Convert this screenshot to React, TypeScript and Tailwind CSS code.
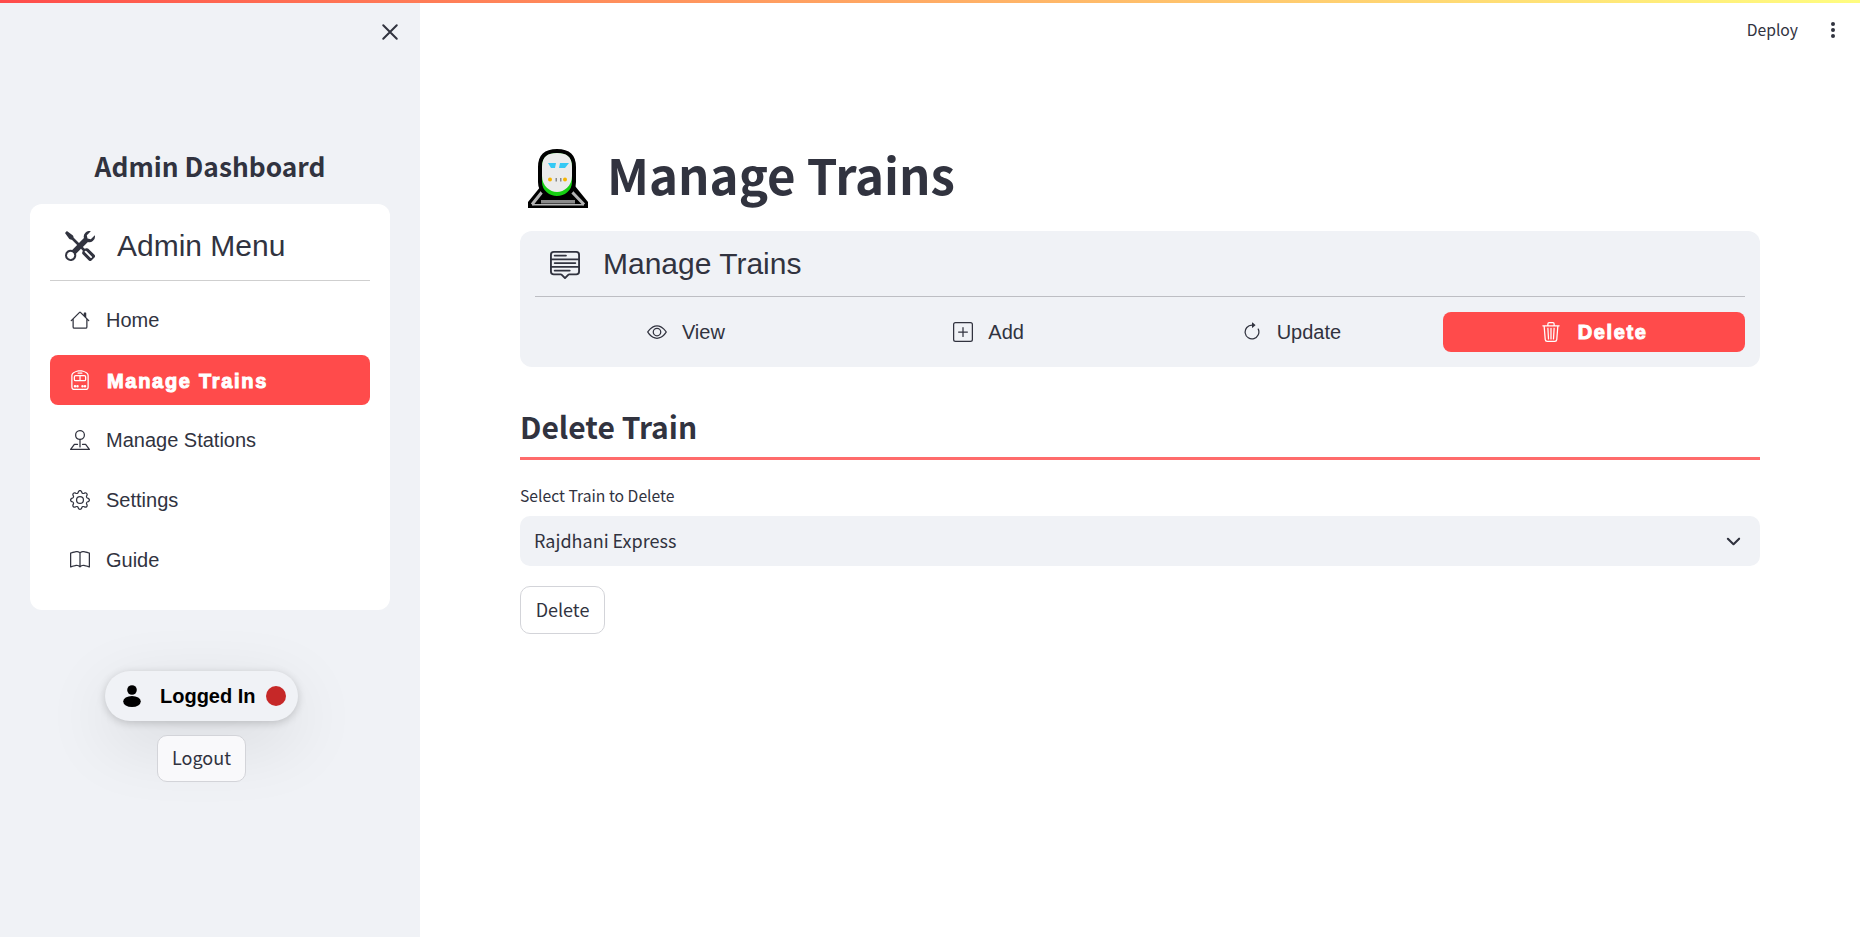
import type { FC, ReactNode } from 'react'
import {
  BsArrowClockwise,
  BsBook,
  BsChevronDown,
  BsEye,
  BsGear,
  BsHouse,
  BsMenuUp,
  BsPinMap,
  BsPlusSquare,
  BsTools,
  BsTrainFront,
  BsTrash3,
} from 'react-icons/bs'
import { clsx } from 'clsx'

const sourceSans = "font-['Noto_Sans_CJK_JP',sans-serif]"
const arial = "font-['Liberation_Sans',Arial,sans-serif]"

const menuItems = [
  { label: 'Home', icon: <BsHouse size={20} /> },
  { label: 'Manage Trains', icon: <BsTrainFront size={20} />, active: true },
  { label: 'Manage Stations', icon: <BsPinMap size={20} /> },
  { label: 'Settings', icon: <BsGear size={20} /> },
  { label: 'Guide', icon: <BsBook size={20} /> },
]

const tabs = [
  { label: 'View', icon: <BsEye size={20} /> },
  { label: 'Add', icon: <BsPlusSquare size={20} /> },
  { label: 'Update', icon: <BsArrowClockwise size={20} /> },
  { label: 'Delete', icon: <BsTrash3 size={20} />, active: true },
]

const TrainEmoji: FC = () => (
  <svg viewBox="7 8 62 62" className="h-[62px] w-[62px] shrink-0">
    <path d="M21 46 L8 62 V68 H68 V62 L55 46 Z" fill="#000" />
    <path d="M22 52 L12 64.5 M52 52 L64 64.5" stroke="#b5b5b5" strokeWidth="3" />
    <rect x="21" y="60" width="34" height="3.5" fill="#8a8a8a" />
    <rect x="12" y="64" width="52" height="1.5" fill="#b5b5b5" />
    <path
      d="M20 27 C20 15 27 11 37 11 C47 11 54 15 54 27 V42 C54 52 45 58 37 58 C29 58 20 52 20 42 Z"
      fill="#16d012"
      stroke="#000"
      strokeWidth="4"
    />
    <path
      d="M22 27 C22 16 28 13 37 13 C46 13 52 16 52 27 V36 C52 46 44 52 37 52 C30 52 22 46 22 36 Z"
      fill="#ebebeb"
    />
    <path d="M28 23 H36 L35 28 H31 Z" fill="#35c9f5" />
    <path d="M49 23 H40 L39 28 H45 Z" fill="#35c9f5" />
    <circle cx="30" cy="39.5" r="2" fill="#f5b400" />
    <circle cx="45" cy="39.5" r="2" fill="#f5b400" />
    <rect x="35.5" y="38" width="1.5" height="3.5" fill="#888" />
    <rect x="40" y="38" width="1.5" height="3.5" fill="#888" />
  </svg>
)

const PersonGlyph: FC = () => (
  <svg viewBox="0 0 18 22" className="h-[22px] w-[18px] shrink-0" fill="#000">
    <circle cx="9" cy="5" r="4.8" />
    <ellipse cx="9" cy="16.5" rx="8.8" ry="5.5" />
  </svg>
)

const OutlineButton: FC<{ className?: string; children: ReactNode }> = ({ className, children }) => (
  <button
    type="button"
    className={clsx(
      sourceSans,
      'flex items-center justify-center rounded-[10px] border border-[#d3d4d9] pb-[3px] text-[18px] leading-none text-[#31333f]',
      className,
    )}
  >
    {children}
  </button>
)

const Sidebar: FC = () => (
  <aside className="flex w-[420px] shrink-0 flex-col bg-[#f0f2f6] pt-[20px] text-[#31333f]">
    <div className="flex justify-end pr-[21px]">
      <svg viewBox="0 0 16 16" className="h-[18px] w-[18px]" stroke="#31333f" strokeWidth="1.8" strokeLinecap="round">
        <path d="M2 2 L14 14 M14 2 L2 14" />
      </svg>
    </div>
    <h2 className={clsx(sourceSans, 'mt-[106px] pb-[2px] text-center text-[26.3px] font-semibold leading-[38px]')}>
      Admin Dashboard
    </h2>
    <div className={clsx(arial, 'mx-[30px] mt-[17px] h-[406px] rounded-[12px] bg-white px-[20px]')}>
      <div className="flex h-[77px] items-center border-b border-[#cfcfcf] pl-[15px] pt-[8px]">
        <BsTools size={30} />
        <span className="ml-[22px] text-[30px] leading-none">Admin Menu</span>
      </div>
      <nav className="mt-[14px] flex flex-col gap-[10px]">
        {menuItems.map((item) => (
          <div
            key={item.label}
            className={clsx(
              'flex h-[50px] items-center rounded-[8px] pl-[20px] text-[20px]',
              item.active && 'bg-[#ff4b4b] text-white',
            )}
          >
            {item.icon}
            <span
              className={clsx(
                'ml-[16px]',
                item.active && 'ml-[17px] pt-[1px] font-bold tracking-[1.7px] [-webkit-text-stroke:1px_white]',
              )}
            >
              {item.label}
            </span>
          </div>
        ))}
      </nav>
    </div>
    <div className="mt-[61px] flex w-[403px] flex-col items-center">
      <div
        className={clsx(
          arial,
          'flex h-[50px] w-[193px] items-center rounded-full bg-[#f0f2f6] pl-[18px] shadow-[0_2px_8px_rgba(0,0,0,0.18),0_20px_70px_rgba(0,0,0,0.11)]',
        )}
      >
        <PersonGlyph />
        <span className="ml-[19px] text-[20px] font-bold leading-none text-black">Logged In</span>
        <span className="ml-[10px] h-[20px] w-[20px] rounded-full bg-[#c62828]" />
      </div>
      <OutlineButton className="relative mt-[14px] h-[47px] w-[89px] bg-[#f9f9fb]">Logout</OutlineButton>
    </div>
  </aside>
)

const Main: FC = () => (
  <main className="min-w-0 flex-1 text-[#31333f]">
    <div className={clsx(sourceSans, 'flex h-[57px] items-center justify-end pb-[4px]')}>
      <span className="text-[15.7px] leading-none">Deploy</span>
      <span className="ml-[33px] mr-[25px] flex flex-col gap-[2px]">
        <span className="h-[4px] w-[4px] rounded-full bg-[#31333f]" />
        <span className="h-[4px] w-[4px] rounded-full bg-[#31333f]" />
        <span className="h-[4px] w-[4px] rounded-full bg-[#31333f]" />
      </span>
    </div>
    <div className="px-[100px] pt-[88px]">
      <div className="mb-[21px] flex h-[62px] items-center pl-[7px]">
        <TrainEmoji />
        <h1 className={clsx(sourceSans, 'mb-[10px] ml-[18px] text-[49.2px] font-bold leading-none')}>Manage Trains</h1>
      </div>
      <section className={clsx(arial, 'h-[136px] rounded-[12px] bg-[#f0f2f6] px-[15px]')}>
        <div className="flex h-[66px] items-center border-b border-[#bdbec3] pl-[15px]">
          <BsMenuUp size={30} />
          <span className="ml-[23px] text-[30px] leading-none">Manage Trains</span>
        </div>
        <div className="mt-[15px] grid grid-cols-4 gap-[1px]">
          {tabs.map((tab) => (
            <div
              key={tab.label}
              className={clsx(
                'flex h-[40px] items-center justify-center rounded-[8px] text-[20px]',
                tab.active && 'bg-[#ff4b4b] text-white',
              )}
            >
              {tab.icon}
              <span
                className={clsx(
                  'ml-[15px]',
                  tab.active && 'ml-[17px] font-bold tracking-[1.6px] [-webkit-text-stroke:1px_white]',
                )}
              >
                {tab.label}
              </span>
            </div>
          ))}
        </div>
      </section>
      <h2 className={clsx(sourceSans, 'mt-[37px] border-b-[3px] border-[#ff6b6b] pb-[8px] text-[30px] font-semibold leading-[45px]')}>
        Delete Train
      </h2>
      <label className={clsx(sourceSans, 'mt-[23px] block text-[15.7px] leading-[25px]')}>Select Train to Delete</label>
      <div className={clsx(sourceSans, 'mt-[8px] flex h-[50px] items-center justify-between rounded-[10px] bg-[#f0f2f6] pl-[14px] pr-[18px] text-[18px]')}>
        <span className="pb-[1px]">Rajdhani Express</span>
        <BsChevronDown size={15} className="mr-[1px]" stroke="currentColor" strokeWidth={1.2} />
      </div>
      <OutlineButton className="mt-[20px] h-[48px] w-[85px] bg-white">Delete</OutlineButton>
    </div>
  </main>
)

const App: FC = () => (
  <div className="flex h-screen flex-col overflow-hidden bg-white">
    <div className="h-[3px] shrink-0 bg-gradient-to-r from-[#ff4b4b] to-[#fffd80]" />
    <div className="flex min-h-0 flex-1">
      <Sidebar />
      <Main />
    </div>
  </div>
)

export default App
